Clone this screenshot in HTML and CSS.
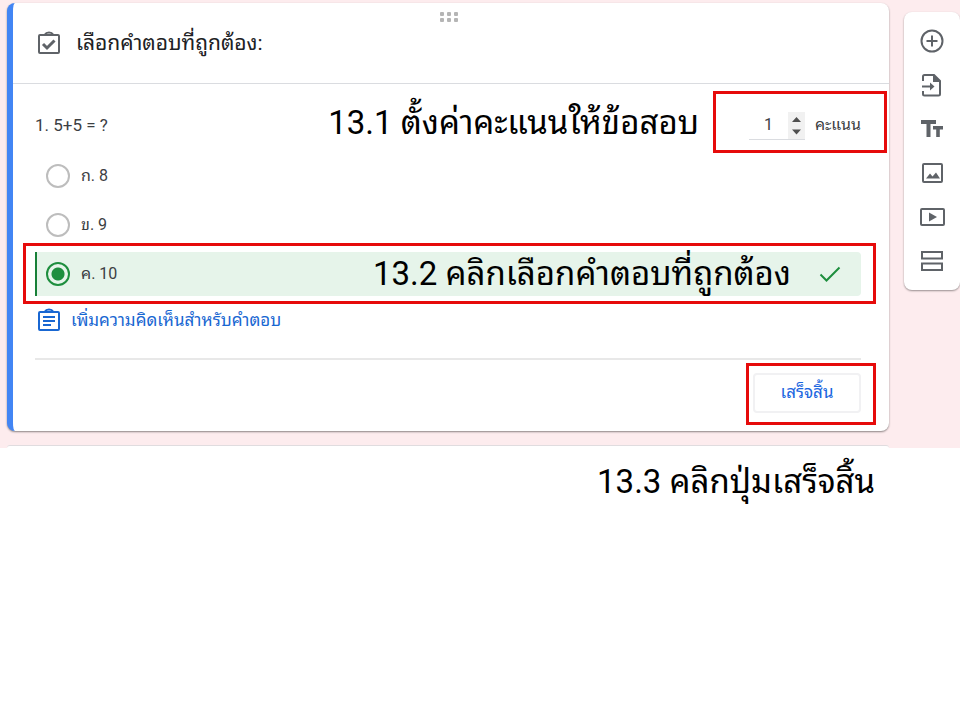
FILE: index.html
```html
<!DOCTYPE html>
<html lang="th">
<head>
  <meta charset="UTF-8">
  <meta name="viewport" content="width=device-width, initial-scale=1.0">
  <title>เลือกคำตอบที่ถูกต้อง</title>
  <link rel="stylesheet" href="styles.css">
</head>
<body>
  <div class="stage">
    <main class="cards">
      <form class="card">
        <div class="drag" aria-hidden="true">
          <svg width="18" height="10" viewBox="0 0 18 10" fill="#b5b5b5">
            <rect x="0" y="0" width="4" height="4" rx="1"/><rect x="7" y="0" width="4" height="4" rx="1"/><rect x="14" y="0" width="4" height="4" rx="1"/>
            <rect x="0" y="6" width="4" height="4" rx="1"/><rect x="7" y="6" width="4" height="4" rx="1"/><rect x="14" y="6" width="4" height="4" rx="1"/>
          </svg>
        </div>
        <header class="card-header">
          <svg class="icon" viewBox="0 0 24 24" fill="none" stroke="#5f6368" stroke-width="2">
            <rect x="2" y="4" width="20" height="18" rx="1"/>
            <path d="M8 3.500q1-2 4-2t4 2" stroke-width="2"/>
            <path d="M6 13l4 4 7.500-7.500" stroke-width="3"/>
          </svg>
          <h1>เลือกคำตอบที่ถูกต้อง:</h1>
        </header>

        <div class="card-body">
          <div class="question">
            <p>1. 5+5 = ?</p>
            <div class="score">
              <input id="points" type="text" inputmode="numeric" value="1">
              <span class="spinner" aria-hidden="true">
                <svg width="17" height="27" viewBox="0 0 17 27" fill="#505050">
                  <path d="M4 10l4.500-5 4.500 5zM4 17.500h9l-4.500 5z"/>
                </svg>
              </span>
              <label for="points">คะแนน</label>
              <div class="frame frame-score"></div>
              <strong class="note note-score">13.1 ตั้งค่าคะแนนให้ข้อสอบ</strong>
            </div>
          </div>

          <div class="options">
            <label class="option"><input type="radio" name="answer">ก. 8</label>
            <label class="option"><input type="radio" name="answer">ข. 9</label>
            <div class="option-wrap">
              <label class="option correct"><input type="radio" name="answer" checked>ค. 10
                <svg class="tick" width="22" height="16" viewBox="0 0 22 16" fill="none" stroke="#1e8e3e" stroke-width="2"><path d="M1.500 8.500l6 6L20.500 1.500"/></svg>
              </label>
              <div class="frame frame-option"></div>
              <strong class="note note-option">13.2 คลิกเลือกคำตอบที่ถูกต้อง</strong>
            </div>
          </div>

          <a class="feedback" href="#">
            <svg class="icon" viewBox="0 0 24 24" fill="none" stroke="#1967d2" stroke-width="2">
              <rect x="2" y="4" width="20" height="18" rx="1"/>
              <path d="M8 3.500q1-2 4-2t4 2" stroke-width="2"/>
              <path d="M6 9h12M6 13h12M6 17h8"/>
            </svg>
            เพิ่มความคิดเห็นสำหรับคำตอบ
          </a>

          <footer class="card-footer">
            <div class="done-wrap">
              <button class="done" type="button">เสร็จสิ้น</button>
              <div class="frame frame-done"></div>
            </div>
          </footer>
        </div>
      </form>
      <div class="next-card"></div>
    </main>

    <nav class="toolbar">
      <button type="button" aria-label="เพิ่มคำถาม">
        <svg viewBox="0 0 26 26"><circle cx="13" cy="13" r="10.500"/><path d="M13 7.500v11M7.500 13h11"/></svg>
      </button>
      <button type="button" aria-label="นำเข้าคำถาม">
        <svg viewBox="0 0 26 26"><path d="M4 9V4.500Q4 3 5.500 3H15l6 6v13q0 1.500-1.500 1.500h-14Q4 23.500 4 22v-3"/><path d="M3 14.500h11"/><path class="solid" d="M14 2l8 8h-8zM11 10.500l4.500 4-4.500 4z"/></svg>
      </button>
      <button type="button" aria-label="เพิ่มชื่อและรายละเอียด">
        <svg viewBox="0 0 26 26"><path class="solid" d="M2 4h15v4h-5.500v13h-4V8H2zM14 10h10v3.500h-3.200V21h-3.600v-7.500H14z"/></svg>
      </button>
      <button type="button" aria-label="เพิ่มรูปภาพ">
        <svg viewBox="0 0 26 26"><rect x="4" y="4" width="19" height="18" rx="1"/><path class="solid" d="M7 18.500l4-5 2.500 3 3.500-4 4 6z"/></svg>
      </button>
      <button type="button" aria-label="เพิ่มวิดีโอ">
        <svg viewBox="0 0 26 26"><rect x="2" y="5" width="23" height="16" rx="1"/><path class="solid" d="M10 8.500l8 4.500-8 4.500z"/></svg>
      </button>
      <button type="button" aria-label="เพิ่มส่วน">
        <svg viewBox="0 0 26 26"><path d="M3 4h20v6.500H3zM3 15.500h20V22H3z"/></svg>
      </button>
    </nav>
  </div>
  <p class="step">13.3 คลิกปุ่มเสร็จสิ้น</p>
</body>
</html>
```
FILE: styles.css
```css
* {
  box-sizing: border-box;
}
body {
  min-height: 100vh;
  margin: 0;
  background-color: #fff;
  font-family: Roboto, "Noto Sans Thai Looped", Loma, Garuda, "Noto Sans", sans-serif;
  font-size: 16px;
  line-height: 24px;
  color: #3c4043;
}
.stage {
  display: flex;
  align-items: flex-start;
  gap: 15px;
  padding: 3px 0 0 7px;
  background-color: #fdecee;
}
.cards {
  flex: 1;
}
.card {
  position: relative;
  border-left: 6px solid #4285f4;
  border-radius: 8px;
  background-color: #fff;
  box-shadow: 0 1px 2px rgba(0, 0, 0, 0.45);
}
.next-card {
  height: 3px;
  margin-top: 14px;
  border-top: 1px solid #e0dcdf;
  border-radius: 8px 8px 0 0;
  background-color: #fff;
}
.icon {
  width: 24px;
  height: 24px;
  flex: none;
}

/* Card header */
.drag {
  position: absolute;
  top: 9px;
  left: 0;
  right: 4px;
  display: flex;
  justify-content: center;
}
.drag svg {
  display: block;
}
.card-header {
  display: flex;
  align-items: center;
  gap: 15px;
  height: 81px;
  padding-left: 24px;
  border-bottom: 1px solid #dadce0;
}
.card-header h1 {
  margin: 0;
  font-size: 21px;
  font-weight: normal;
  color: #202124;
}

/* Question */
.card-body {
  padding: 12px 28px 18px 22px;
}
.question {
  display: flex;
  align-items: center;
  justify-content: space-between;
  height: 58px;
}
.question p {
  margin: 0;
  font-size: 17px;
}
.score {
  position: relative;
  display: flex;
  align-items: center;
}
.score input {
  width: 39px;
  height: 30px;
  padding: 0;
  border: none;
  border-bottom: 1px solid #dadce0;
  font: inherit;
  color: inherit;
  text-align: center;
}
.spinner {
  display: flex;
  height: 30px;
  padding-top: 2px;
  margin-right: 10px;
  border-bottom: 1px solid #dadce0;
}
.spinner svg {
  background-color: #f1f1f1;
}

/* Answer options */
.options {
  display: flex;
  flex-direction: column;
  gap: 5px;
}
.option-wrap {
  position: relative;
}
.option {
  display: flex;
  align-items: center;
  gap: 11px;
  height: 44px;
  padding: 0 20px 0 9px;
  border-left: 2px solid transparent;
}
.option input {
  appearance: none;
  width: 24px;
  height: 24px;
  margin: 0;
  border: 2px solid #bdbdbd;
  border-radius: 50%;
}
.option input:checked {
  border-color: #1e8e3e;
  background: radial-gradient(circle, #1e8e3e 6px, transparent 7px);
}
.correct {
  border-left-color: #188038;
  border-radius: 0 4px 4px 0;
  background-color: #e6f4ea;
}
.tick {
  margin-left: auto;
}

.feedback {
  display: flex;
  align-items: center;
  gap: 10px;
  height: 48px;
  padding-left: 2px;
  font-size: 17px;
  color: #1967d2;
  text-decoration: none;
}

.card-footer {
  display: flex;
  justify-content: flex-end;
  margin-top: 14px;
  padding-top: 13px;
  border-top: 2px solid #e8e8e8;
}
.done-wrap {
  position: relative;
}
.done {
  display: block;
  width: 108px;
  height: 40px;
  padding-bottom: 4px;
  border: 2px solid #f1f1f3;
  border-radius: 4px;
  background-color: #fff;
  font: inherit;
  font-size: 17px;
  color: #1a66e0;
}

/* Red frames and step notes laid over the form */
.frame {
  position: absolute;
  border: 3px solid #e60b0b;
  pointer-events: none;
}
.frame-score {
  top: -19px;
  right: -26px;
  width: 174px;
  height: 62px;
}
.frame-option {
  top: -9px;
  bottom: -8px;
  left: -12px;
  right: -15px;
}
.frame-done {
  top: -10px;
  bottom: -12px;
  left: -7px;
  right: -15px;
}
.note,
.step {
  font-size: 33px;
  font-weight: normal;
  line-height: 48px;
  white-space: nowrap;
  color: #000;
}
.note {
  position: absolute;
}
.note-score {
  top: -11px;
  right: 162px;
}
.note-option {
  top: -2px;
  right: 70px;
}
.step {
  margin: 0;
  padding: 10px 85px 0 0;
  text-align: right;
}

/* Side toolbar */
.toolbar {
  display: flex;
  flex-direction: column;
  align-items: center;
  gap: 18px;
  width: 56px;
  margin-top: 9px;
  padding: 16px 0;
  border-radius: 8px;
  background-color: #fff;
  box-shadow: 0 1px 2px rgba(0, 0, 0, 0.4);
}
.toolbar button {
  display: block;
  padding: 0;
  border: none;
  background: none;
}
.toolbar svg {
  display: block;
  width: 26px;
  height: 26px;
  fill: none;
  stroke: #5f6368;
  stroke-width: 2;
}
.toolbar .solid {
  fill: #5f6368;
  stroke: none;
}
```
